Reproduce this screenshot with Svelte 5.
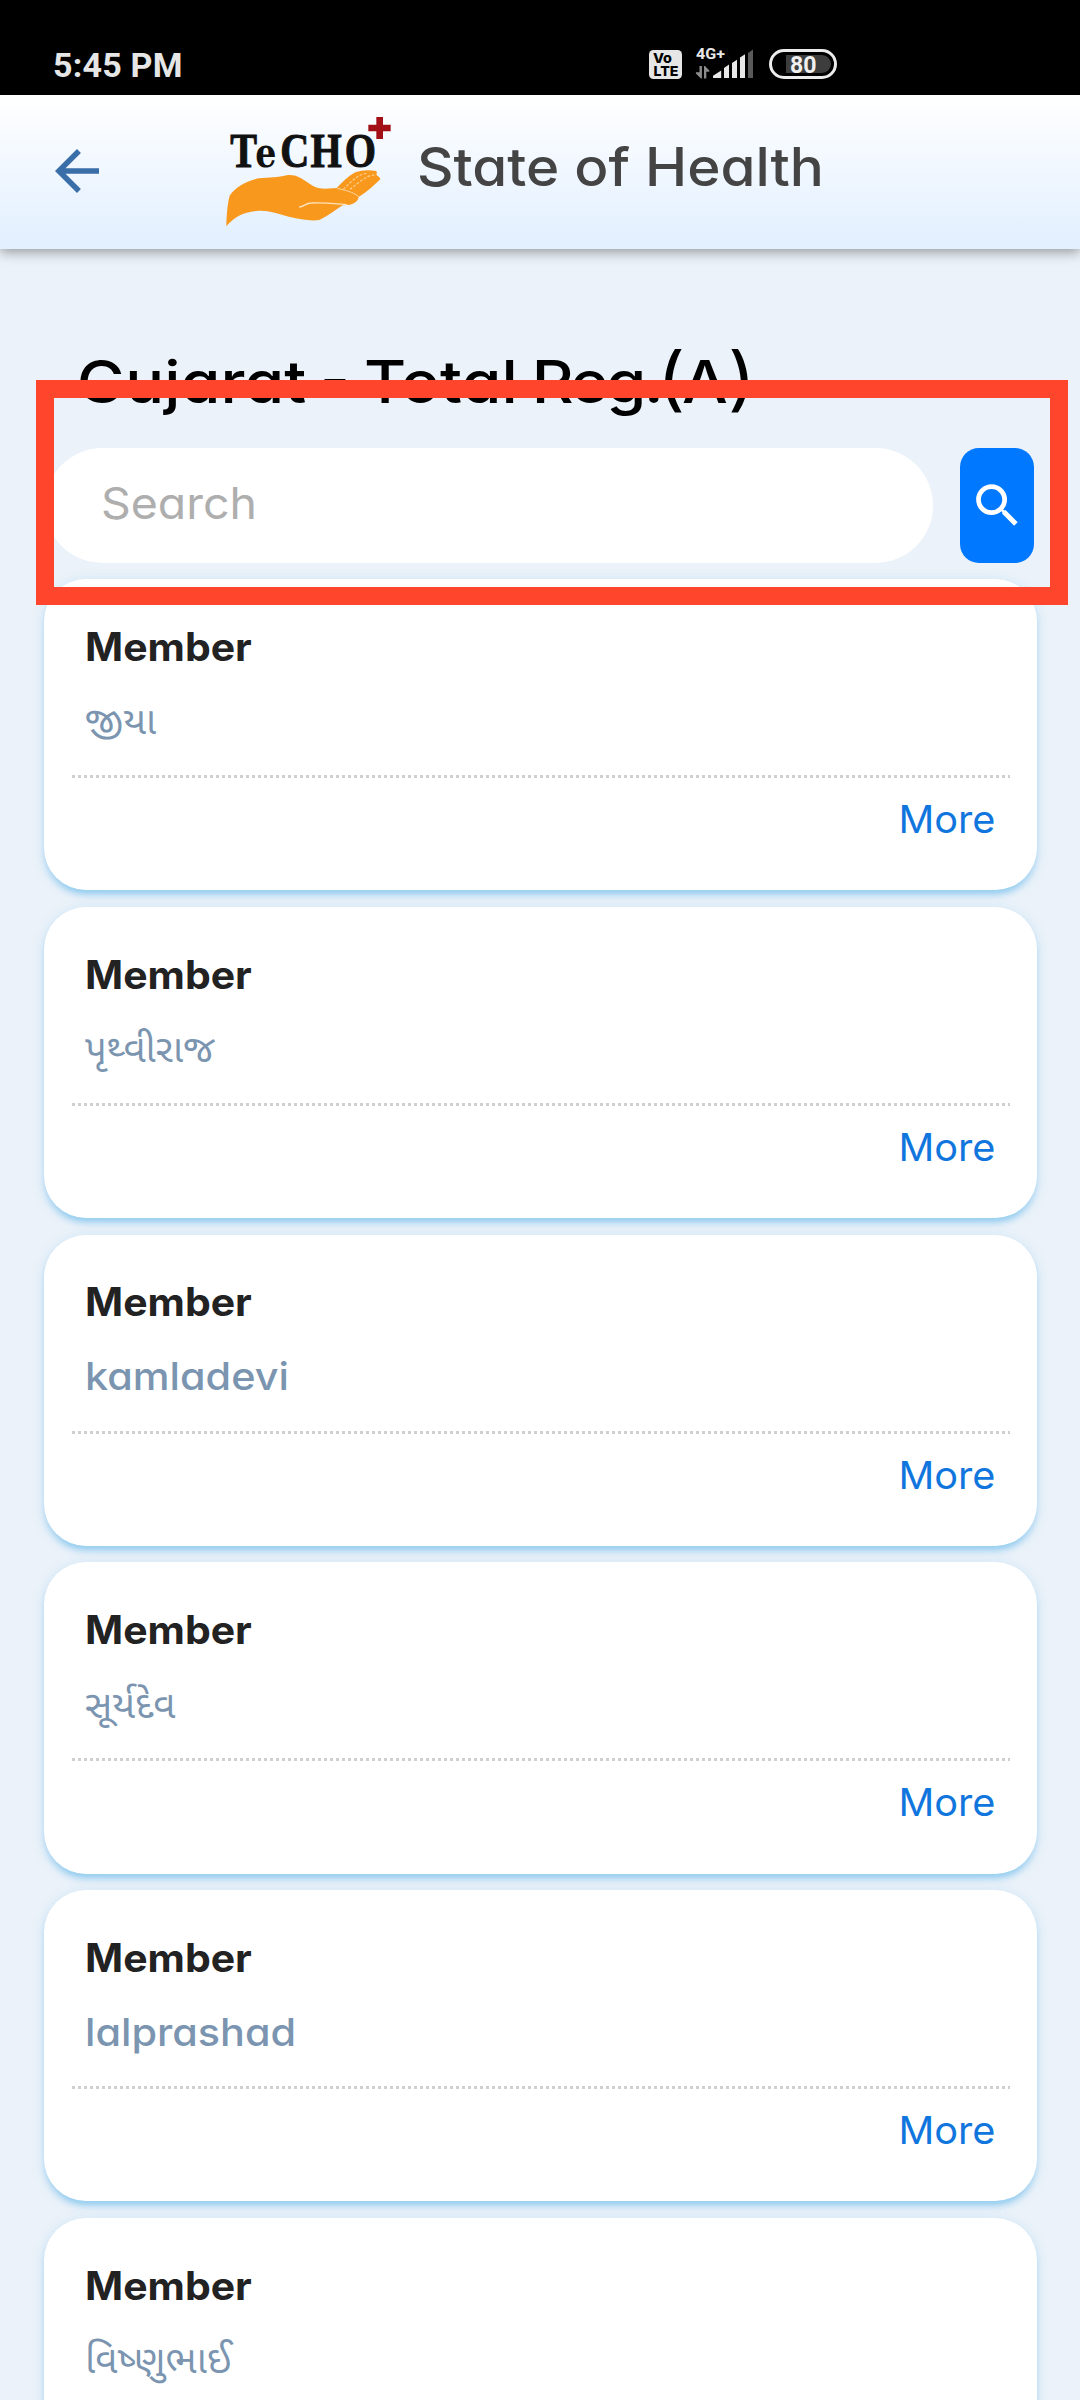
<script>
  const members = ['જીયા', 'પૃથ્વીરાજ', 'kamladevi', 'સૂર્યદેવ', 'lalprashad', 'વિષ્ણુભાઈ'];
  const isLatin = (text) => /^[a-z]/i.test(text);
</script>

<div class="screen">
  <div class="status">
    <span class="time">5:45 PM</span>
    <svg class="indicators" viewBox="640 40 204 50" width="204" height="50">
      <rect x="649" y="50" width="33" height="29" rx="4.5" fill="#e6e6e6" />
      <text class="volte" x="653" y="63" textLength="19" lengthAdjust="spacingAndGlyphs">Vo</text>
      <text class="volte" x="653.5" y="76" textLength="25" lengthAdjust="spacingAndGlyphs">LTE</text>
      <text class="net" x="696" y="59.3" textLength="29" lengthAdjust="spacingAndGlyphs">4G+</text>
      <g fill="#8c8c8c">
        <path d="M699.5 66h2.4v12.5h-1l-5-5v-1.2h3.6z" />
        <path d="M704 66h1l4.3 4.6v1.2h-3v6.7h-2.3z" />
      </g>
      <g fill="#e8e8e8">
        <path d="M713 78v-2.2l8.2-5.3V78z" />
        <path d="M724 68l5-3.4V78h-5z" />
        <path d="M732 63l5-3.2V78h-5z" />
        <path d="M740 57.6l5-3.4V78h-5z" />
      </g>
      <path d="M748 53l5-3.4V78h-5z" fill="#5a5a5a" />
      <rect x="770.5" y="50.5" width="65" height="27" rx="13.5" fill="none" stroke="#ececec" stroke-width="3" />
      <path d="M786 55h36a9 9 0 0 1 0 18h-36z" fill="#3d3d3d" />
      <text class="charge" x="790" y="73" textLength="26.5" lengthAdjust="spacingAndGlyphs">80</text>
    </svg>
  </div>

  <header>
    <svg class="back" viewBox="0 0 24 24" width="66" height="66">
      <path d="M20 11H7.83l5.59-5.59L12 4l-8 8 8 8 1.41-1.41L7.83 13H20v-2z" fill="#3a6ea8" />
    </svg>
    <svg class="logo" viewBox="45 45 501 342" width="167" height="114">
      <path
        d="M49 379C50 346 52 313 59 287C76 262 108 244 146 235C178 233 204 233 230 226C254 222 274 234 291 246C308 259 322 266 344 266L380 264C396 247 414 229 436 217C454 211 476 209 498 213C502 216 501 220 499 224C505 230 511 232 511 238C493 256 470 276 446 291C444 304 432 313 414 315L398 316C376 331 352 348 328 360C298 364 268 357 240 351C205 341 177 331 148 332C104 334 72 350 49 379Z"
        fill="#f8991d" />
      <path d="M269 321C286 319 286 309 304 309C340 307 374 311 410 314" fill="none" stroke="#fde2bb" stroke-width="4" stroke-linecap="round" />
      <path d="M382 265C402 270 431 276 446 290" fill="none" stroke="#fcd7a2" stroke-width="3" />
      <path d="M400 268L428 241L448 226L472 219M420 268L452 243L474 229L500 223" fill="none" stroke="#fcd093" stroke-width="3.5" stroke-dasharray="8 5" />
      <text class="brand" y="200" transform="scale(0.82 1)"><tspan x="74">T</tspan><tspan class="small" x="166">e</tspan><tspan x="257">C</tspan><tspan x="368">H</tspan><tspan x="493">O</tspan></text>
      <path d="M499 51h20v23h23v20h-23v23h-20V94h-24V74h24z" fill="#a20f16" />
    </svg>
    <h1>State of Health</h1>
  </header>

  <main>
    <h2>Gujarat - Total <span class="tight">Reg.</span><span class="paren">(</span>A<span class="paren">)</span></h2>
    <div class="search">
      <div class="field"><span>Search</span></div>
      <button aria-label="Search">
        <svg viewBox="0 0 24 24" width="57" height="57">
          <path
            d="M15.5 14h-.79l-.28-.27A6.471 6.471 0 0 0 16 9.5 6.5 6.5 0 1 0 9.5 16c1.61 0 3.09-.59 4.23-1.57l.27.28v.79l5 4.99L20.49 19l-4.99-5zm-6 0C7.01 14 5 11.99 5 9.5S7.01 5 9.5 5 14 7.01 14 9.5 11.99 14 9.5 14z"
            fill="#fff" />
        </svg>
      </button>
    </div>
    <div class="list">
      {#each members as name}
        <article>
          <div class="label">Member</div>
          <div class="name" class:latin={isLatin(name)}>{name}</div>
          <div class="rule"></div>
          <div class="more">More</div>
        </article>
      {/each}
    </div>
  </main>
  <div class="highlight"></div>
</div>

<style>
  :global(body) {
    background: #ebf2f9;
  }
  .screen {
    position: relative;
    width: 1080px;
    height: 2400px;
    overflow: hidden;
    background: #ebf2f9;
    font-family: Inter, 'Noto Sans', 'Noto Sans Gujarati', sans-serif;
    font-feature-settings: 'cv11';
  }
  .status {
    box-sizing: border-box;
    height: 95px;
    padding: 40px 236px 0 53px;
    display: flex;
    justify-content: space-between;
    background: #000;
  }
  .time {
    font: 700 34px/50px Roboto, sans-serif;
    color: #e6e6e6;
    letter-spacing: 0.2px;
  }
  .volte {
    font: 800 13.5px Inter, sans-serif;
    fill: #000;
  }
  .net {
    font: 700 15px Roboto, sans-serif;
    fill: #e8e8e8;
  }
  .charge {
    font: 700 24px Roboto, sans-serif;
    fill: #f0f0f0;
  }
  header {
    position: relative;
    box-sizing: border-box;
    height: 154px;
    padding-left: 44px;
    display: flex;
    align-items: flex-start;
    background: linear-gradient(#fff, #e1efff);
    box-shadow: 0 3px 12px rgba(0, 0, 0, 0.38);
  }
  .back {
    margin-top: 43px;
  }
  .logo {
    margin: 20px 0 0 115px;
    overflow: visible;
  }
  .brand {
    font: 700 147px 'Liberation Serif', serif;
    fill: #111;
    stroke: #111;
    stroke-width: 3px;
  }
  .small {
    font: 700 122px 'DejaVu Serif', serif;
    stroke: none;
  }
  h1 {
    margin: 32px 0 0 25px;
    font-size: 53px;
    line-height: 80px;
    font-weight: 500;
    color: #444;
    white-space: nowrap;
    transform: scaleX(1.068);
    transform-origin: left;
  }
  main {
    padding: 93px 43px 0 44px;
  }
  h2 {
    height: 80px;
    margin: 0 0 26px 33px;
    font-size: 58.5px;
    line-height: 80px;
    font-weight: 500;
    color: #000;
    white-space: nowrap;
    word-spacing: -3px;
    transform: scaleX(1.105);
    transform-origin: left;
  }
  .tight {
    margin-right: -4px;
    letter-spacing: -2px;
  }
  .paren {
    font-size: 70px;
    line-height: 1px;
    font-weight: 400;
    letter-spacing: -3px;
  }
  .search {
    display: flex;
    justify-content: space-between;
    height: 115px;
    margin: 0 3px 16px 1px;
  }
  .field {
    box-sizing: border-box;
    width: 888px;
    padding-left: 56px;
    border-radius: 58px;
    background: #fff;
    font-size: 44px;
    line-height: 110px;
    color: #aeaeae;
  }
  .field span {
    display: inline-block;
    transform: scaleX(1.055);
    transform-origin: left;
  }
  button {
    width: 74px;
    padding: 0;
    border: 0;
    border-radius: 19px;
    background: #0078ff;
    display: flex;
    align-items: center;
    justify-content: center;
  }
  .list {
    display: flex;
    flex-direction: column;
    gap: 16.6px;
  }
  article {
    box-sizing: border-box;
    height: 311.2px;
    flex: none;
    padding: 37.8px 27px 0 28px;
    border-radius: 42px;
    background: #fff;
    box-shadow:
      0 8.25px 2.75px -5.5px rgba(0, 146, 225, 0.1),
      0 5.5px 5.5px 0 rgba(0, 146, 225, 0.18),
      0 2.75px 13.75px 0 rgba(0, 146, 225, 0.14);
  }
  .label {
    width: 200px;
    padding-left: 13px;
    font-size: 39px;
    line-height: 60px;
    font-weight: 700;
    color: #222;
    transform: scaleX(1.05);
    transform-origin: 13px 50%;
  }
  .name {
    width: 300px;
    height: 60px;
    margin: 13.6px 0 24.6px;
    padding-left: 13px;
    font-size: 38.5px;
    line-height: 60px;
    font-weight: 400;
    color: #7b95b0;
    white-space: nowrap;
  }
  .latin {
    font-weight: 500;
    transform: scaleX(1.075);
    transform-origin: 13px 50%;
  }
  .rule {
    height: 3px;
    background: repeating-linear-gradient(90deg, #d0d0d0 0 3px, transparent 3px 6px);
  }
  .more {
    margin: 16px 14.5px 0 0;
    font-size: 38.5px;
    line-height: 50px;
    text-align: right;
    color: #1076de;
    transform: scaleX(1.03);
    transform-origin: right;
  }
  .highlight {
    position: absolute;
    left: 36px;
    top: 380px;
    width: 1032px;
    height: 225px;
    box-sizing: border-box;
    border: 18px solid #ff452c;
  }
</style>
